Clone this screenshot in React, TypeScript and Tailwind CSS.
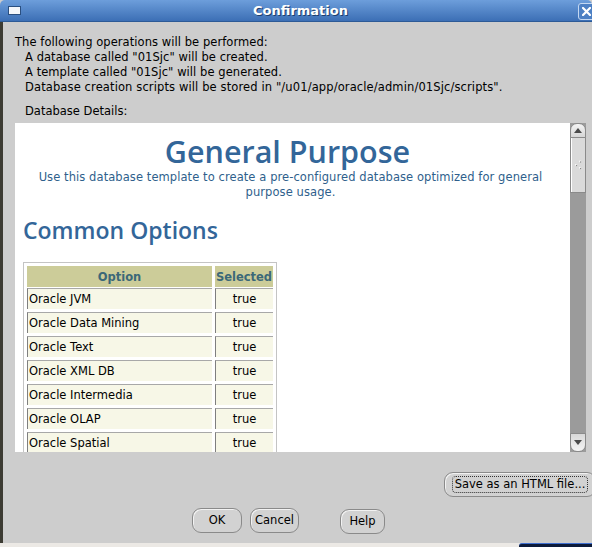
const options = [
  "Oracle JVM",
  "Oracle Data Mining",
  "Oracle Text",
  "Oracle XML DB",
  "Oracle Intermedia",
  "Oracle OLAP",
  "Oracle Spatial",
];

function Pill({ label, w, focus = false }: { label: string; w: string; focus?: boolean }) {
  return (
    <div
      className={`${w} h-[25px] shrink-0 rounded-[9px] border border-[#8a8a8a] bg-[#d2d2d2] shadow-[inset_1px_1px_0_#f2f2f2] flex items-center justify-center text-[11.5px] text-black`}
    >
      {focus ? (
        <span className="px-[2px] leading-[15px] border border-dotted border-[#333] rounded-[4px]">{label}</span>
      ) : (
        <span>{label}</span>
      )}
    </div>
  );
}

function Scrollbar() {
  return (
    <div className="w-[16px] h-full flex flex-col bg-[#9b9b9b]">
      <div className="h-[15px] rounded-t-[7px] border border-[#8a8a8a] bg-gradient-to-b from-[#f4f4f4] to-[#d6d6d6] flex items-center justify-center">
        <svg width="8" height="5" viewBox="0 0 8 5">
          <path d="M0 5 L4 0 L8 5 Z" fill="#4a4a4a" />
        </svg>
      </div>
      <div className="h-[55px] border border-[#8a8a8a] border-t-0 bg-[#dadada] shadow-[inset_1px_0_0_#ffffff] flex items-center justify-center">
        <svg width="8" height="10" viewBox="0 0 8 10">
          <circle cx="6" cy="1.5" r="1" fill="#ffffff" />
          <circle cx="2" cy="5" r="1" fill="#ffffff" />
          <circle cx="6" cy="8" r="1" fill="#ffffff" />
          <circle cx="6.5" cy="2" r="0.7" fill="#888" />
          <circle cx="2.5" cy="5.5" r="0.7" fill="#888" />
          <circle cx="6.5" cy="8.5" r="0.7" fill="#888" />
        </svg>
      </div>
      <div className="flex-1 bg-[#9b9b9b]" />
      <div className="h-[19px] rounded-b-[7px] border border-[#8a8a8a] bg-gradient-to-b from-[#d8d8d8] to-[#f4f4f4] flex items-center justify-center">
        <svg width="8" height="5" viewBox="0 0 8 5">
          <path d="M0 0 L8 0 L4 5 Z" fill="#4a4a4a" />
        </svg>
      </div>
    </div>
  );
}

export default function App() {
  return (
    <div className="w-[592px] h-[547px] overflow-hidden flex flex-col bg-[#cdcdcd] font-['DejaVu_Sans',sans-serif] text-black">
      {/* title bar */}
      <div className="relative h-[22px] shrink-0 rounded-t-[5px] bg-gradient-to-b from-[#6d9edb] to-[#3c6fb5] border-b border-[#2d5a96] flex items-center">
        <div className="ml-[8px] w-[13px] h-[9px] border border-[#2a4f80] bg-[#f4f6fa]" />
        <div className="absolute inset-0 pl-[9px] flex items-center justify-center text-[13px] font-bold text-white [text-shadow:1px_1px_0_#1e3f6e]">
          Confirmation
        </div>
        <div className="absolute left-[578px] top-[3px] w-[17px] h-[17px] rounded-[3px] border border-[#c4d8f2] bg-[#4d80c4] flex items-center justify-center">
          <svg width="9" height="9" viewBox="0 0 9 9">
            <path d="M1 1 L8 8 M8 1 L1 8" stroke="#ffffff" strokeWidth="2.2" strokeLinecap="square" />
          </svg>
        </div>
      </div>

      {/* body */}
      <div className="flex-1 flex flex-col border-l-[3px] border-[#3c3b33] pl-[12px]">
        <div className="mt-[13px] text-[11.5px] leading-[15px] tracking-[0.06px]">
          <div>The following operations will be performed:</div>
          <div className="pl-[10px]">A database called "01Sjc" will be created.</div>
          <div className="pl-[10px]">A template called "01Sjc" will be generated.</div>
          <div className="pl-[10px] tracking-[0.12px]">
            Database creation scripts will be stored in "/u01/app/oracle/admin/01Sjc/scripts".
          </div>
        </div>
        <div className="mt-[9px] pl-[10px] text-[11.5px] leading-[15px]">Database Details:</div>

        {/* details panel */}
        <div className="mt-[4px] h-[329px] w-[571px] flex">
          <div className="w-[555px] h-full bg-white overflow-hidden">
            <div className="pt-[10px] pr-[10px] text-center font-['Open_Sans',sans-serif] font-semibold text-[30.5px] leading-[36px] text-[#336699]">
              General Purpose
            </div>
            <div className="mt-[1px] pl-[18px] pr-[22px] text-center text-[11.5px] leading-[15px] tracking-[0.08px] text-[#2f5f8c]">
              Use this database template to create a pre-configured database optimized for general purpose usage.
            </div>
            <div className="mt-[16px] pl-[8px] font-['Open_Sans',sans-serif] font-semibold text-[23px] leading-[28px] text-[#336699]">
              Common Options
            </div>

            <div className="mt-[18px] ml-[8px] w-[254px] border border-[#c4c4c4] px-[3px] pt-[3px] flex flex-col">
              <div className="flex gap-[3px] h-[21px]">
                <div className="w-[185px] bg-[#cccc99] flex items-center justify-center pt-[2px] text-[11.5px] font-bold text-[#3b6878]">
                  Option
                </div>
                <div className="w-[58px] bg-[#cccc99] flex items-center justify-center pt-[2px] text-[11.5px] font-bold text-[#3b6878]">
                  Selected
                </div>
              </div>
              <div className="mt-[1px] flex flex-col gap-[3px]">
                {options.map((o) => (
                  <div key={o} className="flex gap-[3px] h-[21px]">
                    <div className="w-[185px] bg-[#f7f7e7] border-t border-l border-t-[#a8a8a8] border-l-[#7f7f7f] flex items-center pl-[1px] pt-[1px] text-[11.5px]">
                      {o}
                    </div>
                    <div className="w-[58px] bg-[#f7f7e7] border-t border-l border-t-[#a8a8a8] border-l-[#7f7f7f] flex items-center justify-center pt-[1px] text-[11.5px]">
                      true
                    </div>
                  </div>
                ))}
              </div>
            </div>
          </div>
          <Scrollbar />
        </div>

        <div className="mt-[20px] pl-[429px] flex">
          <Pill label="Save as an HTML file..." w="w-[152px]" focus />
        </div>

        <div className="mt-[11px] flex items-start">
          <div className="ml-[177px]">
            <Pill label="OK" w="w-[50px]" />
          </div>
          <div className="ml-[8px]">
            <Pill label="Cancel" w="w-[49px]" />
          </div>
          <div className="ml-[41px] mt-[1px]">
            <Pill label="Help" w="w-[45px]" />
          </div>
        </div>
      </div>

      {/* bottom strip */}
      <div className="h-[4px] shrink-0 bg-[#ece9e5] flex">
        <div className="ml-auto w-[73px] h-full rounded-tl-[3px] bg-[#0c1a3a] border-t border-[#3f6fd0]" />
      </div>
    </div>
  );
}
